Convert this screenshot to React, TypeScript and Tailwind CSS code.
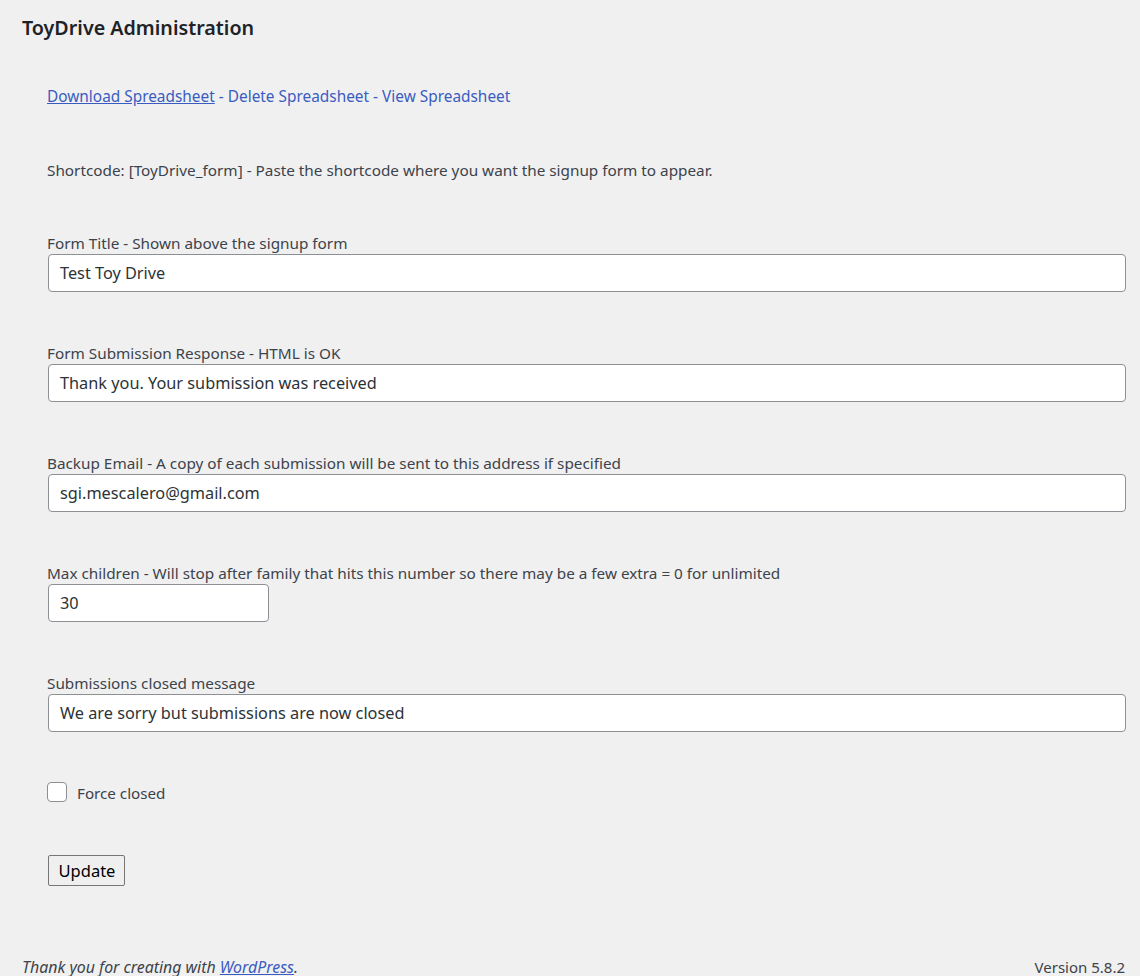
import React from "react";

const font = { fontFamily: '"Noto Sans", "Open Sans", sans-serif' };

function Field({ label, value, narrow }: { label: string; value: string; narrow?: boolean }) {
  return (
    <div className="flex flex-col">
      <div className="text-[15.3px] leading-[20px] text-[#3c434a]">{label}</div>
      <div
        className={`mt-[1px] ml-[1px] h-[38px] ${narrow ? "w-[221px]" : "w-[1078px]"} rounded-[4px] border border-[#8c8f94] bg-white pl-[11px] pt-[1px] flex items-center text-[16.3px] text-[#2c3338]`}
      >
        {value}
      </div>
    </div>
  );
}

export default function App() {
  return (
    <div className="h-[976px] overflow-hidden bg-[#f0f0f1] text-[#3c434a]" style={font}>
      <div className="pl-[22px] pr-[14px]">
        <h1 className="pt-[14px] text-[19.7px] leading-[28px] font-semibold text-[#1d2327]">ToyDrive Administration</h1>
        <div className="pl-[25px]">
          <div className="mt-[45px] text-[15.4px] leading-[20px] text-[#3a5cc0]">
            <a href="#" className="underline">Download Spreadsheet</a>
            <span> - </span>
            <a href="#">Delete Spreadsheet</a>
            <span> - </span>
            <a href="#">View Spreadsheet</a>
          </div>
          <div className="mt-[53px] text-[15.3px] leading-[20px]">
            Shortcode: [ToyDrive_form] - Paste the shortcode where you want the signup form to appear.
          </div>
          <div className="mt-[53px] flex flex-col gap-[51px]">
            <Field label="Form Title - Shown above the signup form" value="Test Toy Drive" />
            <Field label="Form Submission Response - HTML is OK" value="Thank you. Your submission was received" />
            <Field
              label="Backup Email - A copy of each submission will be sent to this address if specified"
              value="sgi.mescalero@gmail.com"
            />
            <Field
              label="Max children - Will stop after family that hits this number so there may be a few extra = 0 for unlimited"
              value="30"
              narrow
            />
            <Field label="Submissions closed message" value="We are sorry but submissions are now closed" />
          </div>
          <div className="mt-[50px] flex items-start h-[20px]">
            <span className="h-[20px] w-[20px] rounded-[4px] border border-[#8c8f94] bg-white" />
            <span className="ml-[10px] mt-[1px] text-[15.2px] leading-[20px]">Force closed</span>
          </div>
          <div className="mt-[53px] ml-[1px] flex">
            <button className="h-[31px] w-[77px] pl-[1px] pt-[2px] rounded-[2px] border border-[#767676] bg-[#efefef] text-[16.5px] text-black flex items-center justify-center">
              Update
            </button>
          </div>
        </div>
      </div>
      <div className="mt-[72px] pl-[22px] pr-[15px] flex justify-between items-center h-[19px] text-[15.9px] leading-[19px]">
        <span className="italic">
          Thank you for creating with <a href="#" className="underline text-[#3a5cc0]">WordPress</a>.
        </span>
        <span className="text-[15px]">Version 5.8.2</span>
      </div>
    </div>
  );
}
